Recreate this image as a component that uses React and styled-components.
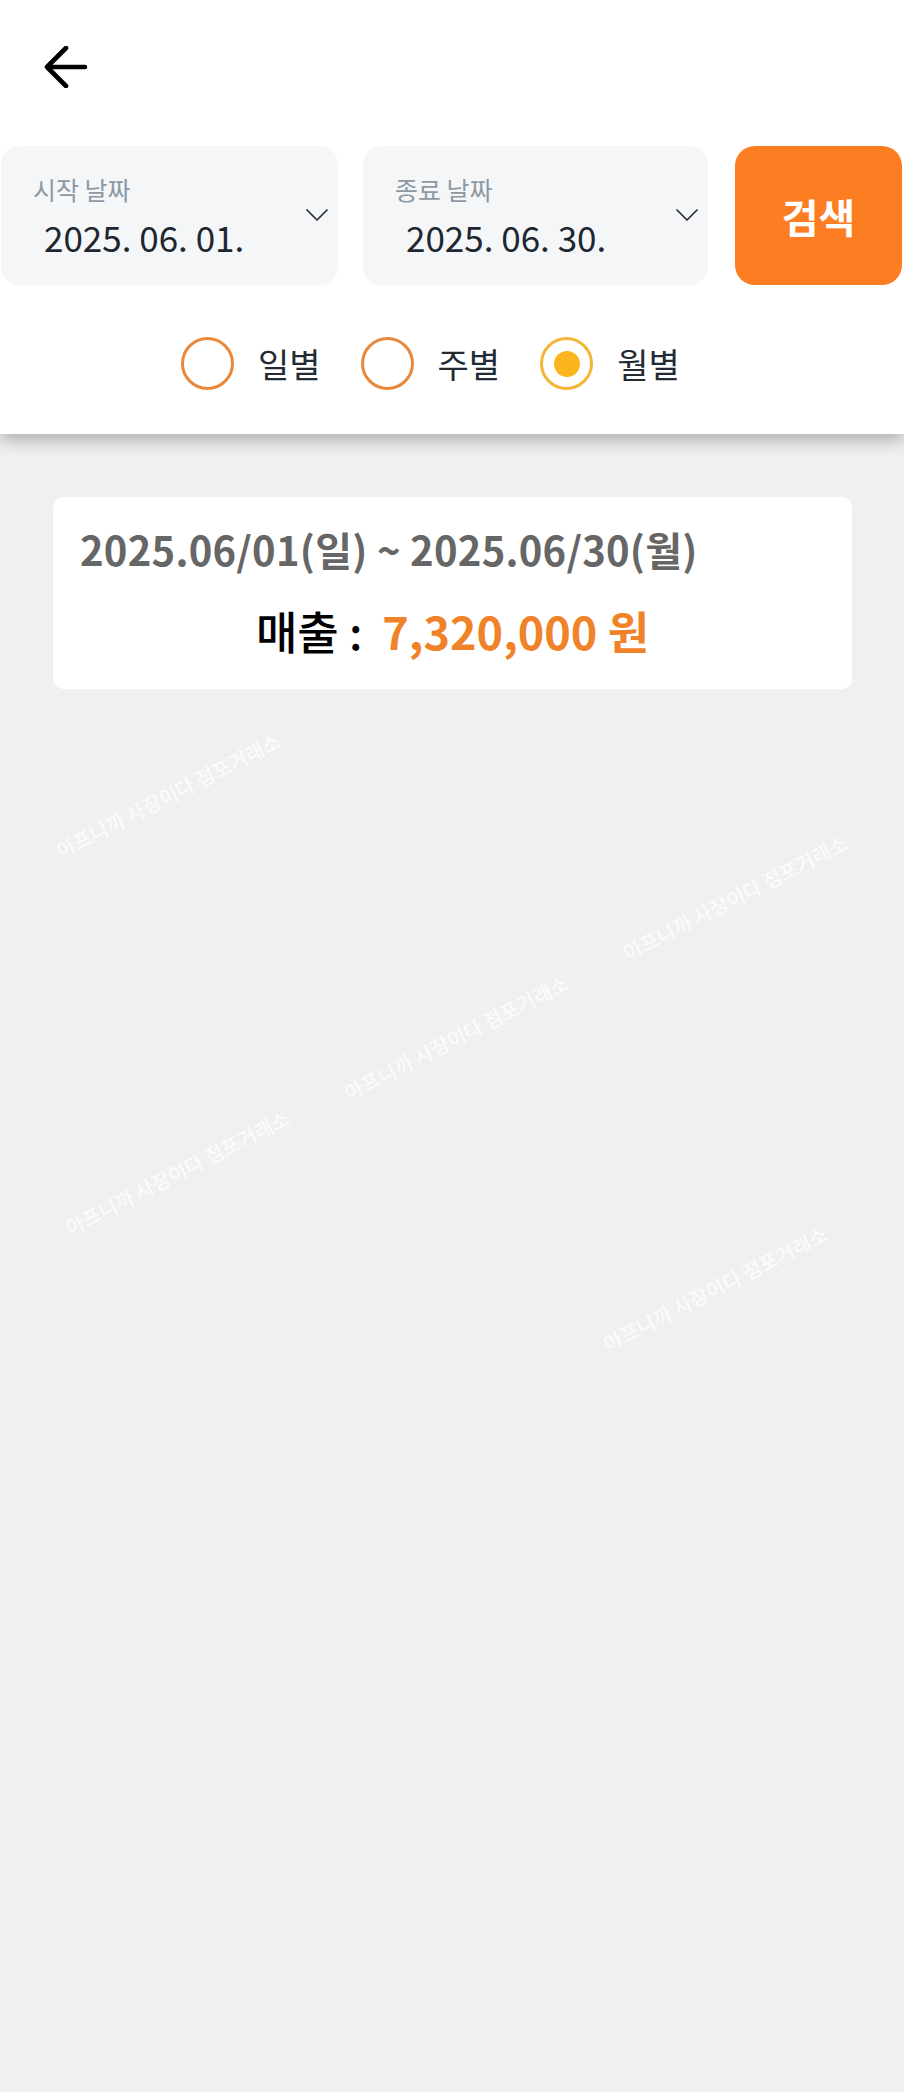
import React from "react";
import styled, { createGlobalStyle } from "styled-components";

const GlobalStyle = createGlobalStyle`
  html, body { margin: 0; padding: 0; background: #f0f0f0; }
  body { font-family: "Noto Sans CJK KR", "Noto Sans", sans-serif; }
  * { box-sizing: border-box; }
`;

const Page = styled.div`
  position: relative;
  min-height: 2092px;
  background: #f0f0f0;
  overflow: hidden;
`;

const Header = styled.header`
  position: relative;
  z-index: 1;
  background: #ffffff;
  box-shadow: 0 6px 16px rgba(0, 0, 0, 0.28);
`;

const TopBar = styled.div`
  height: 146px;
  display: flex;
  align-items: flex-start;
  padding: 45px 0 0 43px;
`;

const BackButton = styled.button`
  border: 0;
  background: none;
  padding: 0;
  width: 46px;
  height: 44px;
  display: flex;
  align-items: center;
  justify-content: center;
  cursor: pointer;
`;

const FilterRow = styled.div`
  display: flex;
  height: 139px;
  padding-left: 1px;
`;

const DateField = styled.div`
  width: ${(p) => p.$w}px;
  margin-right: ${(p) => p.$gap}px;
  background: #f4f6f8;
  border-radius: 18px;
  display: flex;
  align-items: center;
  padding-right: 10px;
`;

const FieldText = styled.div`
  flex: 1;
  display: flex;
  flex-direction: column;
`;

const FieldLabel = styled.span`
  padding-left: 32px;
  font-size: 25px;
  line-height: 32px;
  color: #8d98a5;
`;

const FieldValue = styled.span`
  margin-top: 10px;
  padding-left: 43px;
  font-size: 35px;
  line-height: 44px;
  color: #1f2630;
`;

const SearchButton = styled.button`
  width: 167px;
  height: 100%;
  border: 0;
  border-radius: 20px;
  background: #fd7e22;
  color: #ffffff;
  font-family: inherit;
  font-size: 40px;
  font-weight: 700;
  cursor: pointer;
`;

const RadioRow = styled.div`
  display: flex;
  align-items: center;
  padding: 52px 0 44px 181px;
`;

const RadioItem = styled.label`
  display: flex;
  align-items: center;
  gap: 24px;
  margin-right: 40px;
  cursor: pointer;
`;

const RadioCircle = styled.span`
  width: 53px;
  height: 53px;
  border-radius: 50%;
  border: 3px solid ${(p) => (p.$checked ? "#f3b635" : "#e9883a")};
  display: flex;
  align-items: center;
  justify-content: center;
  background: #fff;
`;

const RadioDot = styled.span`
  width: 26px;
  height: 26px;
  border-radius: 50%;
  background: #fcb51d;
`;

const RadioLabel = styled.span`
  font-size: 34px;
  line-height: 40px;
  color: #222a33;
`;

const Card = styled.section`
  margin: 63px 52px 0 53px;
  background: #ffffff;
  border-radius: 10px;
  padding: 28px 27px 32px;
`;

const DateRange = styled.div`
  font-size: 40px;
  line-height: 48px;
  font-weight: 600;
  color: #666666;
  letter-spacing: 0.25px;
`;

const Sales = styled.div`
  margin-top: 32px;
  text-align: center;
  font-size: 45px;
  line-height: 52px;
  font-weight: 500;
  color: #000;
`;

const Amount = styled.span`
  margin-left: 20px;
  color: #f0832a;
  font-weight: 700;
`;

const Watermark = styled.span`
  position: absolute;
  left: ${(p) => p.$x}px;
  top: ${(p) => p.$y}px;
  transform: translate(-50%, -50%) rotate(-27deg);
  white-space: nowrap;
  font-size: 20px;
  font-weight: 500;
  color: rgba(255, 255, 255, 0.8);
  pointer-events: none;
`;

const BackArrow = () => (
  <svg width="44" height="42" viewBox="0 0 44 42" fill="none">
    <path
      d="M3 21 H41 M22 2 L3 21 L22 40"
      stroke="#000"
      strokeWidth="4.6"
      strokeLinecap="round"
      strokeLinejoin="round"
    />
  </svg>
);

const Chevron = () => (
  <svg width="22" height="13" viewBox="0 0 22 13" fill="none">
    <path d="M1 1 L11 11 L21 1" stroke="#2b2f36" strokeWidth="1.7" strokeLinecap="round" strokeLinejoin="round" />
  </svg>
);

const watermarks = [
  { x: 168, y: 795 },
  { x: 735, y: 897 },
  { x: 456, y: 1037 },
  { x: 177, y: 1172 },
  { x: 715, y: 1288 },
];

const radios = [
  { label: "일별", checked: false },
  { label: "주별", checked: false },
  { label: "월별", checked: true },
];

export default function App() {
  return (
    <>
      <GlobalStyle />
      <Page>
        <Header>
          <TopBar>
            <BackButton aria-label="뒤로">
              <BackArrow />
            </BackButton>
          </TopBar>
          <FilterRow>
            <DateField $w={337} $gap={25}>
              <FieldText>
                <FieldLabel>시작 날짜</FieldLabel>
                <FieldValue>2025. 06. 01.</FieldValue>
              </FieldText>
              <Chevron />
            </DateField>
            <DateField $w={345} $gap={27}>
              <FieldText>
                <FieldLabel>종료 날짜</FieldLabel>
                <FieldValue>2025. 06. 30.</FieldValue>
              </FieldText>
              <Chevron />
            </DateField>
            <SearchButton>검색</SearchButton>
          </FilterRow>
          <RadioRow>
            {radios.map((r) => (
              <RadioItem key={r.label}>
                <RadioCircle $checked={r.checked}>{r.checked && <RadioDot />}</RadioCircle>
                <RadioLabel>{r.label}</RadioLabel>
              </RadioItem>
            ))}
          </RadioRow>
        </Header>
        <Card>
          <DateRange>2025.06/01(일) ~ 2025.06/30(월)</DateRange>
          <Sales>
            매출 :<Amount>7,320,000 원</Amount>
          </Sales>
        </Card>
        {watermarks.map((w, i) => (
          <Watermark key={i} $x={w.x} $y={w.y}>
            아프니까 사장이다 점포거래소
          </Watermark>
        ))}
      </Page>
    </>
  );
}
